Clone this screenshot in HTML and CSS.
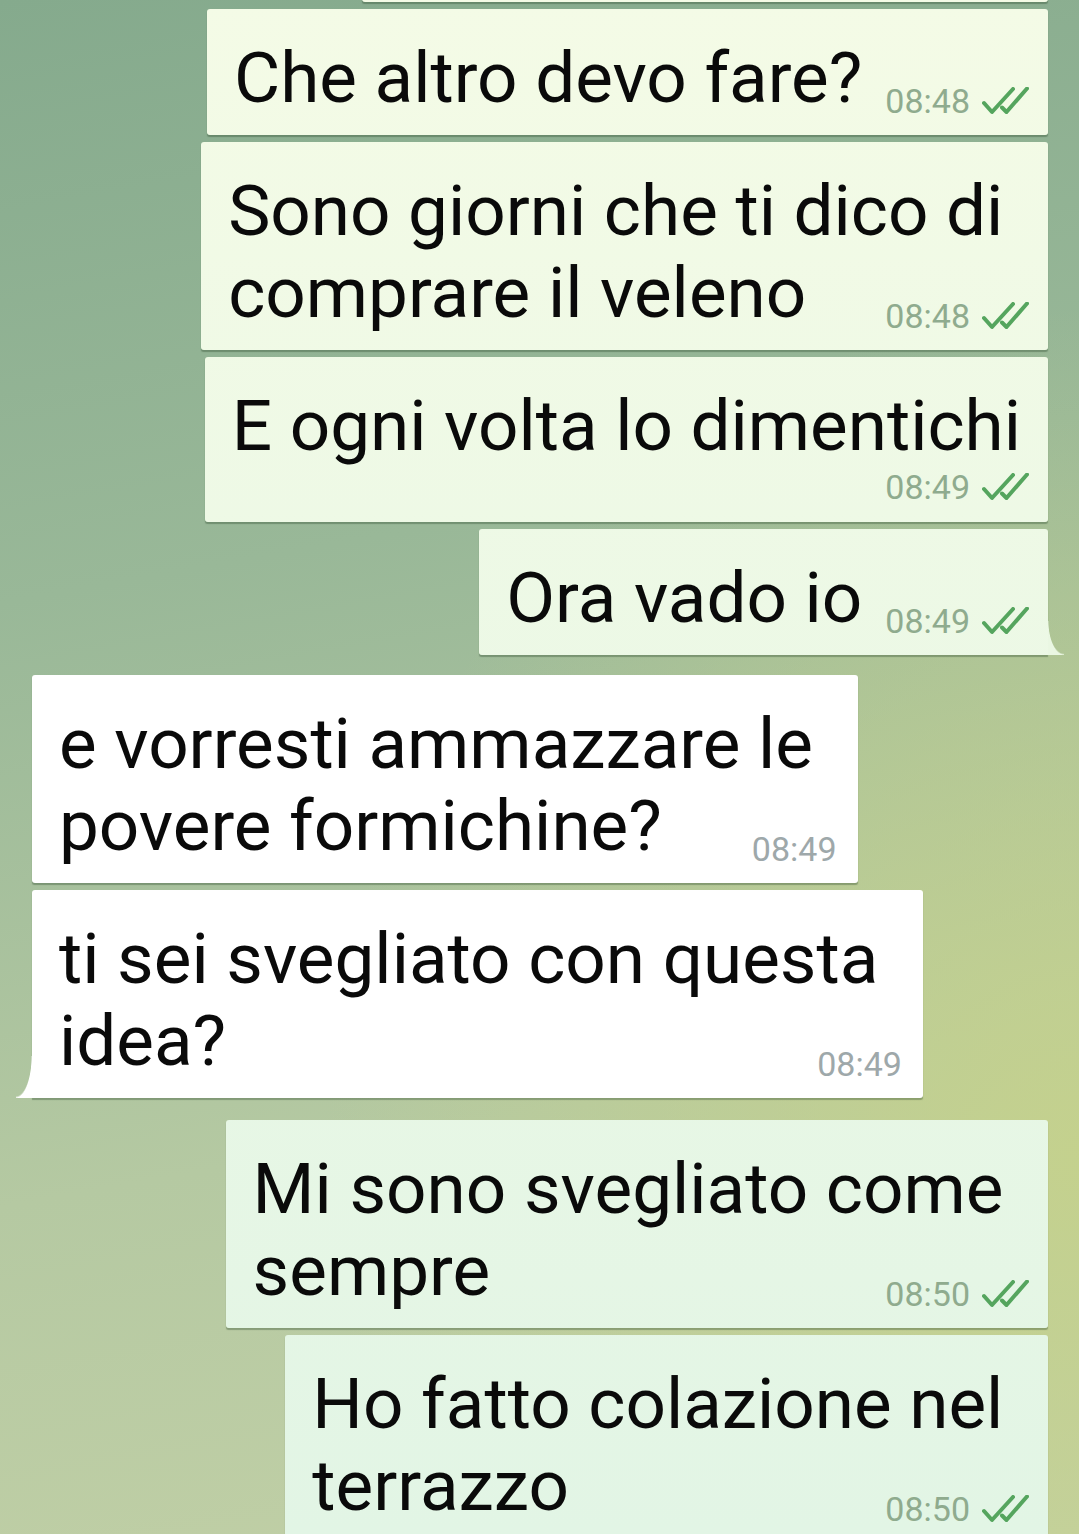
FILE: index.html
```html
<!DOCTYPE html>
<html lang="it">
<head>
    <meta charset="UTF-8">
    <meta name="viewport" content="width=device-width, initial-scale=1.0">
    <title>Chat</title>
    <link rel="stylesheet" href="styles.css">
</head>
<body>
    <div class="chat">
        <div class="group out">
            <div class="msg msg-cut"></div>

            <div class="msg">Che altro devo fare?<span class="meta"><span class="time">08:48</span><svg class="ticks" viewBox="0 0 47 28"><path d="M2 16 L10 25 L31 2 M20 20.5 L24.5 25 L45 1.5"/></svg></span></div>

            <div class="msg">Sono giorni che ti dico di&nbsp;<br>comprare il veleno<span class="meta"><span class="time">08:48</span><svg class="ticks" viewBox="0 0 47 28"><path d="M2 16 L10 25 L31 2 M20 20.5 L24.5 25 L45 1.5"/></svg></span></div>

            <div class="msg wide">E ogni volta lo dimentichi<span class="meta"><span class="time">08:49</span><svg class="ticks" viewBox="0 0 47 28"><path d="M2 16 L10 25 L31 2 M20 20.5 L24.5 25 L45 1.5"/></svg></span></div>

            <div class="msg tail-r">Ora vado io<span class="meta"><span class="time">08:49</span><svg class="ticks" viewBox="0 0 47 28"><path d="M2 16 L10 25 L31 2 M20 20.5 L24.5 25 L45 1.5"/></svg></span></div>
        </div>

        <div class="group in">
            <div class="msg">e vorresti ammazzare le&nbsp;<br>povere formichine?<span class="meta"><span class="time">08:49</span></span></div>

            <div class="msg tail-l">ti sei svegliato con questa&nbsp;<br>idea?<span class="meta"><span class="time">08:49</span></span></div>
        </div>

        <div class="group out later">
            <div class="msg">Mi sono svegliato come&nbsp;<br>sempre<span class="meta"><span class="time">08:50</span><svg class="ticks" viewBox="0 0 47 28"><path d="M2 16 L10 25 L31 2 M20 20.5 L24.5 25 L45 1.5"/></svg></span></div>

            <div class="msg">Ho fatto colazione nel&nbsp;<br>terrazzo<span class="meta"><span class="time">08:50</span><svg class="ticks" viewBox="0 0 47 28"><path d="M2 16 L10 25 L31 2 M20 20.5 L24.5 25 L45 1.5"/></svg></span></div>
        </div>
    </div>
</body>
</html>
```

FILE: styles.css
```css
* {
    margin: 0;
    padding: 0;
    box-sizing: border-box;
}

html, body {
    height: 100%;
    overflow: hidden;
}

body {
    font-family: Roboto, 'Noto Sans', sans-serif;
    background:
        radial-gradient(ellipse 70% 55% at 100% 75%, rgba(198, 210, 138, 0.85), rgba(198, 210, 138, 0) 100%),
        linear-gradient(170deg, #85aa8d 0%, #99b898 35%, #b5c9a2 70%, #c2d0a6 100%);
}

.chat {
    display: flex;
    flex-direction: column;
    gap: 20px;
    padding: 0 31px 0 32px;
}

.group {
    display: flex;
    flex-direction: column;
    gap: 7px;
}

.group.out {
    align-items: flex-end;
}

.group.in {
    align-items: flex-start;
}

.group.later {
    margin-top: 2px;
}

/* message bubble */
.msg {
    position: relative;
    padding: 28px 27px 16px;
    font-size: 71px;
    line-height: 82px;
    color: #0a0a0a;
    border-radius: 3px;
    box-shadow: 0 2px 1px -0.5px rgba(40, 70, 40, 0.35);
}

.out .msg {
    background: linear-gradient(#f4fbe6, #e2f5e5) fixed;
}

.in .msg {
    background: #fff;
}

.msg-cut {
    width: 686px;
    height: 100px;
    margin-top: -98px;
    padding: 0;
}

/* time + read ticks */
.meta {
    float: right;
    display: flex;
    align-items: flex-end;
    gap: 12px;
    margin: 48px -8px 0 23px;
    font-size: 34px;
    line-height: 33px;
    color: #8fab8e;
}

.in .meta {
    color: #9ea8aa;
    margin-right: -6px;
}

.msg.wide .meta {
    float: none;
    justify-content: flex-end;
    margin: 4px -8px 2px 0;
}

.ticks {
    width: 47px;
    height: 28px;
    margin-bottom: 3px;
}

.ticks path {
    fill: none;
    stroke: #55a55e;
    stroke-width: 4;
    stroke-linecap: round;
    stroke-linejoin: round;
}

/* bubble tails */
.msg.tail-r {
    border-bottom-right-radius: 0;
}

.msg.tail-r::after {
    content: "";
    position: absolute;
    right: -16px;
    bottom: 0;
    width: 16px;
    height: 34px;
    background: radial-gradient(ellipse 16px 34px at 100% 0, rgba(234, 247, 227, 0) 95%, #eaf7e3 100%);
}

.msg.tail-l {
    border-bottom-left-radius: 0;
}

.msg.tail-l::after {
    content: "";
    position: absolute;
    left: -16px;
    bottom: 0;
    width: 16px;
    height: 42px;
    background: radial-gradient(ellipse 16px 42px at 0 0, rgba(255, 255, 255, 0) 95%, #fff 100%);
}
```
